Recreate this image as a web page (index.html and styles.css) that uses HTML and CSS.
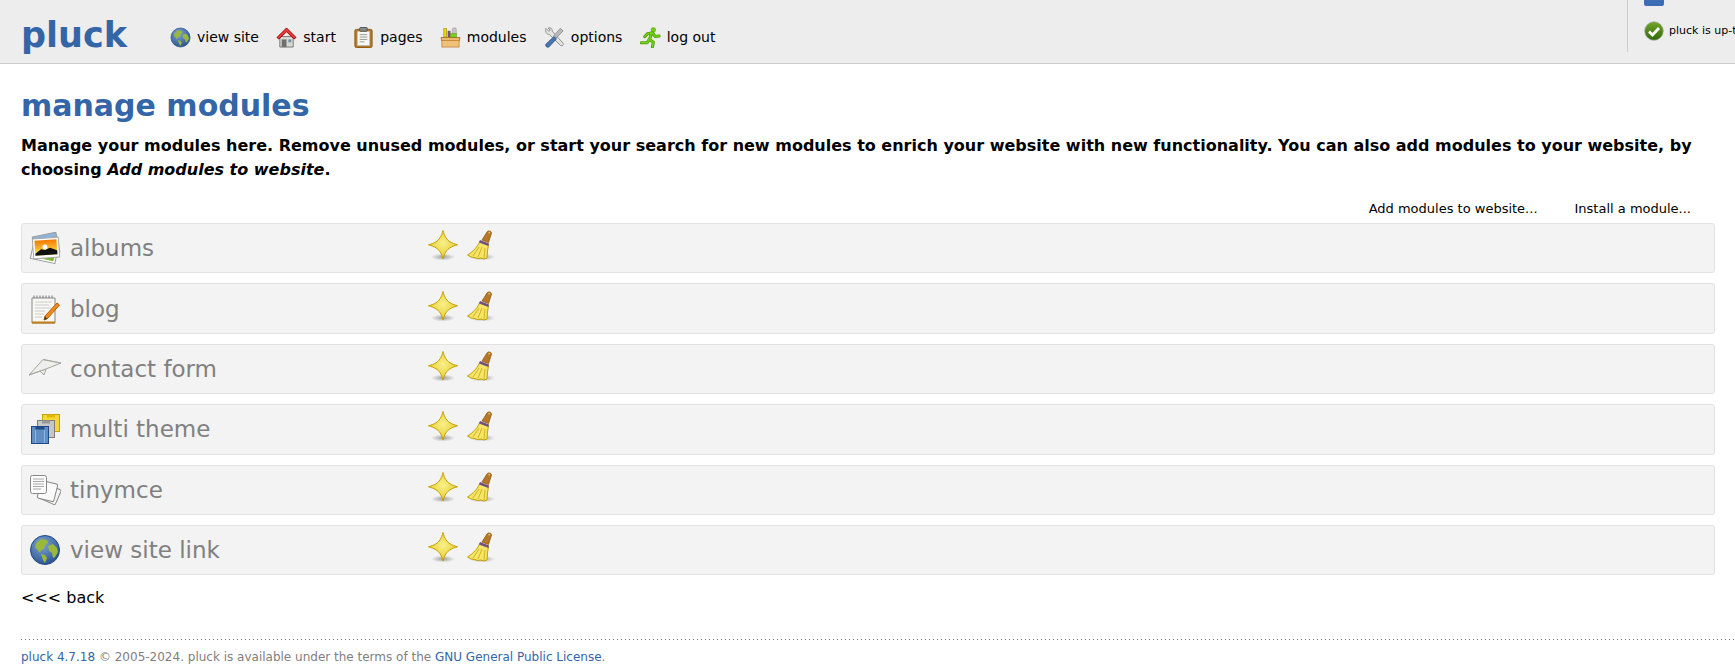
FILE: index.html
```html
<!DOCTYPE html>
<html>
<head>
    <title>manage modules - pluck</title>
    <link rel="stylesheet" href="styles.css">
</head>
<body>
    <svg class="defs" width="0" height="0">
        <defs>
            <radialGradient id="seaGrad" cx="0.4" cy="0.3" r="0.8">
                <stop offset="0" stop-color="#7fa6d6"/>
                <stop offset="1" stop-color="#204a87"/>
            </radialGradient>
            <radialGradient id="starGrad" cx="0.5" cy="0.45" r="0.5">
                <stop offset="0" stop-color="#f9f08c"/>
                <stop offset="1" stop-color="#e6cf30"/>
            </radialGradient>
            <radialGradient id="shadowGrad">
                <stop offset="0" stop-color="#000" stop-opacity="0.35"/>
                <stop offset="1" stop-color="#000" stop-opacity="0"/>
            </radialGradient>
            <linearGradient id="skyGrad" x1="0" y1="0" x2="0" y2="1">
                <stop offset="0" stop-color="#f57900"/>
                <stop offset="1" stop-color="#fce94f"/>
            </linearGradient>
            <linearGradient id="checkGrad" x1="0" y1="0" x2="0" y2="1">
                <stop offset="0" stop-color="#73a62c"/>
                <stop offset="1" stop-color="#2f6a08"/>
            </linearGradient>
            <symbol id="i-globe" viewBox="0 0 32 32">
                <circle cx="16" cy="16" r="14.5" fill="url(#seaGrad)" stroke="#204a87"/>
                <path d="M7 9l5-4 6 1 1 3-3 2-1 4-3 1-1 3-3-4-2-1zM19 12l5-2 4 4 1 4-3 5-2 1-1-5-3-2zM12 20l4 1 2 3-2 5-2-3z" fill="#9ab83c"/>
            </symbol>
            <symbol id="i-star" viewBox="0 0 32 32">
                <ellipse cx="16" cy="28" rx="12" ry="3.5" fill="url(#shadowGrad)"/>
                <path d="M16 1.500C17.500 7.500 20 11 23 12.800 25 14 27.500 15 30.500 15.800 27.500 16.600 25 17.600 23 18.800 20 20.600 17.500 24 16 30 14.500 24 12 20.600 9 18.800 7 17.600 4.500 16.600 1.500 15.800 4.500 15 7 14 9 12.800 12 11 14.500 7.500 16 1.500z" fill="url(#starGrad)" stroke="#c4a000" stroke-linejoin="round"/>
            </symbol>
            <symbol id="i-broom" viewBox="0 0 32 32">
                <ellipse cx="18" cy="28" rx="13" ry="3.500" fill="url(#shadowGrad)"/>
                <path d="M18 11l5-8c1-1.700 4.500-1.200 4.500 1l-3 9.500z" fill="#b5772a" stroke="#8f5902" stroke-width=".8"/>
                <circle cx="25.300" cy="3.700" r=".9" fill="#e9b96e"/>
                <path d="M16 12L24.500 15.500 23.500 22 23 29 20 30 17 29 14 29.500 10 28.500 7 28 3.500 26C10 22 14 17 16 12z" fill="#f4e468" stroke="#c4a000" stroke-linejoin="round"/>
                <path d="M16 11l9 3.500-.6 2.500-9.400-3.500z" fill="#75507b"/>
                <path d="M15 18l-6 9M18 18l-4 10M21 19l-1 10" fill="none" stroke="#c4a000" stroke-width=".7"/>
            </symbol>
            <symbol id="i-albums" viewBox="0 0 32 32">
                <rect x="5" y="2.500" width="24" height="20" fill="#8cb4dc" stroke="#999" transform="rotate(-12 17 12)"/>
                <rect x="3" y="10" width="25" height="19" fill="#fff" stroke="#999" transform="rotate(12 15 20)"/>
                <rect x="5" y="13" width="21" height="14" fill="#73b828" transform="rotate(12 15 20)"/>
                <g transform="rotate(-4 17 16)">
                    <rect x="4" y="6" width="26" height="20" fill="#fff" stroke="#aaa"/>
                    <rect x="6" y="8" width="22" height="15" fill="url(#skyGrad)"/>
                    <circle cx="16" cy="15" r="2.500" fill="#fff"/>
                    <path d="M6 21l6-4 4 1 5-2 7 3v4H6z" fill="#111"/>
                </g>
            </symbol>
            <symbol id="i-blog" viewBox="0 0 32 32">
                <path d="M3 5h23v25H3z" fill="#f7f7f3" stroke="#888"/>
                <path d="M3 29.500h23" stroke="#c17d11" stroke-width="2"/>
                <path d="M5 5V2.500M8 5V2.500M11 5V2.500M14 5V2.500M17 5V2.500M20 5V2.500M23 5V2.500" stroke="#777"/>
                <path d="M6 9h17M6 12h14M6 15h16M6 18h10M6 21h9M6 24h7" stroke="#ccc"/>
                <path d="M15 27l1-4L28 10l2.500 2L18 26z" fill="#f08a1d" stroke="#b85f00" stroke-linejoin="round"/>
                <path d="M15 27l1-3.500 2 2z" fill="#333"/>
            </symbol>
            <symbol id="i-plane" viewBox="0 0 32 32">
                <path d="M0 22L14 6.500 32 10 17 16 15 22 11 18z" fill="#eeeeec" stroke="#a5a59c" stroke-linejoin="round"/>
                <path d="M0 22L17 16M11 18l6-2M14 6.500L32 10" fill="none" stroke="#a5a59c" stroke-width=".8"/>
            </symbol>
            <symbol id="i-theme" viewBox="0 0 32 32">
                <rect x="13.500" y="1.500" width="17" height="17" fill="#f5d63a" stroke="#c4a000"/>
                <path d="M18 1.500h8v3h-8z" fill="#e0b800"/>
                <rect x="8.500" y="7.500" width="17" height="17" fill="#c6c6c3" stroke="#7d7d7a"/>
                <path d="M13 7.500h8v3h-8z" fill="#999"/>
                <rect x="2.500" y="13.500" width="17" height="17" fill="#5e8ec4" stroke="#204a87"/>
                <path d="M6.500 13.500h9v3h-9z" fill="#204a87"/>
                <path d="M6.500 17v13M15.500 17v13" stroke="#8fb3dc"/>
            </symbol>
            <symbol id="i-docs" viewBox="0 0 32 32">
                <rect x="12" y="12" width="18" height="16" rx="1.500" fill="#f6f6f4" stroke="#888" transform="rotate(24 21 20)"/>
                <rect x="10" y="8" width="17" height="18" rx="1.500" fill="#fafafa" stroke="#888" transform="rotate(14 18 17)"/>
                <rect x="1.500" y="1.500" width="16" height="18" rx="2" fill="#fcfcfc" stroke="#888"/>
                <path d="M4 5h11M4 7.500h11M4 10h11M4 12.500h11M4 15h8" stroke="#aaa"/>
            </symbol>
            <symbol id="i-home" viewBox="0 0 22 22">
                <path d="M4 10h14v11H4z" fill="#d8d8d4" stroke="#777"/>
                <path d="M6 13h5v8H6z" fill="#6f6f6c"/>
                <path d="M13 13h3v3h-3z" fill="#6f8caf"/>
                <path d="M1 11L11 1l10 10-2 1.500L11 5l-8 7.500z" fill="#e63c3c" stroke="#a40000" stroke-linejoin="round"/>
            </symbol>
            <symbol id="i-pages" viewBox="0 0 22 22">
                <rect x="2" y="2.500" width="18" height="19" rx="1.500" fill="#b5772a" stroke="#8f5902"/>
                <path d="M4.500 4.500h13v15h-13z" fill="#f8f8f6" stroke="#aaa" stroke-width=".6"/>
                <rect x="7" y=".5" width="8" height="4" rx="1" fill="#888a85" stroke="#555"/>
                <path d="M7 8h8M7 10.500h8M7 13h8M7 15.500h5" stroke="#999"/>
            </symbol>
            <symbol id="i-modules" viewBox="0 0 22 22">
                <rect x="4" y="1.500" width="3" height="9" fill="#edd400" stroke="#8a7a00" stroke-width=".5"/>
                <rect x="8" y="4" width="3" height="7" fill="#75507b"/>
                <rect x="13" y="1" width="4" height="10" rx="1" fill="#c6c6c3" stroke="#888" stroke-width=".5"/>
                <rect x="11" y="7" width="6" height="4" fill="#73d216" stroke="#4e9a06" stroke-width=".5"/>
                <path d="M1 11h20l-1 4H2z" fill="#e9b96e" stroke="#8f5902" stroke-width=".7"/>
                <rect x="2" y="14" width="18" height="7" fill="#f0c179" stroke="#b5772a" stroke-width=".7"/>
            </symbol>
            <symbol id="i-tools" viewBox="0 0 22 22">
                <path d="M2 1.500l3 3 1.500-1L4.500 1c2.500-.8 4.500 1 4.200 3.500L20 17c1 1.500-.8 3.500-2.500 2.500L5.500 7.800C3 8 .8 5 2 1.500z" fill="#e4e4e0" stroke="#777" stroke-width=".8"/>
                <path d="M17 1.500l3 2.500-7 7.500-2.500-2.500z" fill="#bbb" stroke="#777" stroke-width=".7"/>
                <path d="M10.500 10L13 12.500 5 21c-1.500 1-4-1-3-3z" fill="#4a76ad" stroke="#204a87" stroke-width=".8"/>
            </symbol>
            <symbol id="i-run" viewBox="0 0 22 22">
                <circle cx="14" cy="3" r="2.300" fill="#73d216" stroke="#4e9a06" stroke-width=".7"/>
                <path d="M8 7l5-1 3 4 4-.5M12 7l-2 6 4 3-1 5M9.500 13l-2 3.500H1.500M8 7l-3 3" fill="none" stroke="#4e9a06" stroke-width="3.200" stroke-linecap="round" stroke-linejoin="round"/>
                <path d="M8 7l5-1 3 4 4-.5M12 7l-2 6 4 3-1 5M9.500 13l-2 3.500H1.500M8 7l-3 3" fill="none" stroke="#73d216" stroke-width="1.600" stroke-linecap="round" stroke-linejoin="round"/>
            </symbol>
            <symbol id="i-check" viewBox="0 0 20 20">
                <circle cx="10" cy="10" r="9.300" fill="url(#checkGrad)" stroke="#aaa" stroke-width=".7"/>
                <path d="M5 10.500l3.500 3.500L15 7" fill="none" stroke="#fff" stroke-width="2.800"/>
            </symbol>
        </defs>
    </svg>

    <div class="header">
        <a class="logo" href="#">pluck</a>
        <ul class="nav">
            <li><svg class="nav-icon"><use href="#i-globe"/></svg>view site</li>
            <li><svg class="nav-icon"><use href="#i-home"/></svg>start</li>
            <li><svg class="nav-icon"><use href="#i-pages"/></svg>pages</li>
            <li><svg class="nav-icon"><use href="#i-modules"/></svg>modules</li>
            <li><svg class="nav-icon"><use href="#i-tools"/></svg>options</li>
            <li><svg class="nav-icon"><use href="#i-run"/></svg>log out</li>
        </ul>
        <div class="status">
            <div class="trash-stub"></div>
            <div class="status-line">
                <svg class="status-icon"><use href="#i-check"/></svg>
                <span class="status-text">pluck is up-to-date</span>
            </div>
        </div>
    </div>

    <div class="content">
        <h1>manage modules</h1>
        <p class="intro">Manage your modules here. Remove unused modules, or start your search for new modules to enrich your website with new functionality. You can also add modules to your website, by choosing <em>Add modules to website</em>.</p>

        <div class="actions">
            <a href="#">Add modules to website...</a>
            <a href="#">Install a module...</a>
        </div>

        <div class="module">
            <svg class="module-icon"><use href="#i-albums"/></svg>
            <span class="module-name">albums</span>
            <svg class="tool-icon"><use href="#i-star"/></svg>
            <svg class="tool-icon"><use href="#i-broom"/></svg>
        </div>
        <div class="module">
            <svg class="module-icon"><use href="#i-blog"/></svg>
            <span class="module-name">blog</span>
            <svg class="tool-icon"><use href="#i-star"/></svg>
            <svg class="tool-icon"><use href="#i-broom"/></svg>
        </div>
        <div class="module">
            <svg class="module-icon"><use href="#i-plane"/></svg>
            <span class="module-name">contact form</span>
            <svg class="tool-icon"><use href="#i-star"/></svg>
            <svg class="tool-icon"><use href="#i-broom"/></svg>
        </div>
        <div class="module">
            <svg class="module-icon"><use href="#i-theme"/></svg>
            <span class="module-name">multi theme</span>
            <svg class="tool-icon"><use href="#i-star"/></svg>
            <svg class="tool-icon"><use href="#i-broom"/></svg>
        </div>
        <div class="module">
            <svg class="module-icon"><use href="#i-docs"/></svg>
            <span class="module-name">tinymce</span>
            <svg class="tool-icon"><use href="#i-star"/></svg>
            <svg class="tool-icon"><use href="#i-broom"/></svg>
        </div>
        <div class="module">
            <svg class="module-icon"><use href="#i-globe"/></svg>
            <span class="module-name">view site link</span>
            <svg class="tool-icon"><use href="#i-star"/></svg>
            <svg class="tool-icon"><use href="#i-broom"/></svg>
        </div>

        <p class="back"><a href="#">&lt;&lt;&lt; back</a></p>
    </div>

    <div class="footer">
        <a href="#">pluck 4.7.18</a> © 2005-2024. pluck is available under the terms of the <a href="#">GNU General Public License</a>.
    </div>
</body>
</html>
```

FILE: styles.css
```css
html, body {
    height: 100%;
}
body {
    font-family: "DejaVu Sans", sans-serif;
    margin: 0;
    padding: 0;
    background-color: #fff;
    color: #000;
    overflow: hidden;
}
a {
    color: inherit;
    text-decoration: none;
}
.defs {
    display: block;
    height: 0;
}
.header {
    display: flex;
    height: 63px;
    background-color: #ededed;
    border-bottom: 1px solid #ccc;
    overflow: hidden;
}
.logo {
    flex: none;
    width: 149px;
    padding: 15px 0 0 21px;
    font-size: 35px;
    font-weight: bold;
    line-height: 41px;
    color: #3465a7;
}
.nav {
    display: flex;
    flex: 1;
    gap: 17.3px;
    margin: 0;
    padding: 26px 0 0;
    list-style: none;
}
.nav li {
    display: flex;
    align-items: center;
    gap: 6px;
    height: 22px;
    font-size: 14px;
    white-space: nowrap;
}
.nav-icon {
    flex: none;
    width: 21px;
    height: 21px;
}
.status {
    flex: none;
    width: 91px;
    height: 52px;
    padding-left: 16px;
    border-left: 1px solid #ccc;
    white-space: nowrap;
}
.trash-stub {
    width: 20px;
    height: 6px;
    background-color: #3b6cb4;
    border-radius: 0 0 2px 2px;
}
.status-line {
    display: flex;
    align-items: center;
    gap: 5px;
    margin-top: 15px;
    font-size: 11px;
}
.status-icon {
    flex: none;
    width: 20px;
    height: 20px;
}
.status-text {
    margin-top: -2px;
}
.content {
    padding: 0 20px 0 21px;
}
h1 {
    margin: 24px 0 0;
    font-size: 30px;
    line-height: 35px;
    font-weight: bold;
    color: #3465a7;
}
.intro {
    margin: 11px 0 0;
    font-size: 16px;
    line-height: 24px;
    font-weight: bold;
}
.actions {
    display: flex;
    justify-content: flex-end;
    gap: 37px;
    margin-top: 19px;
    padding-right: 24px;
    font-size: 13px;
    line-height: 16px;
}
.module {
    display: flex;
    align-items: center;
    box-sizing: border-box;
    height: 50.4px;
    margin-top: 10px;
    padding-left: 7px;
    background-color: #f3f3f3;
    border: 1px solid #e1e1e1;
    border-radius: 3px;
}
.actions + .module {
    margin-top: 6px;
}
.module-icon {
    flex: none;
    width: 32px;
    height: 32px;
}
.module-name {
    flex: none;
    width: 366px;
    padding-left: 9px;
    box-sizing: border-box;
    font-size: 23px;
    color: #808080;
}
.tool-icon {
    flex: none;
    width: 32px;
    height: 32px;
    margin-top: -6px;
}
.module-name + .tool-icon {
    margin-right: 5px;
}
.back {
    margin: 14px 0 0;
    font-size: 16px;
    line-height: 18px;
}
.footer {
    margin: 32px 0 0 21px;
    padding-top: 9px;
    background-image: linear-gradient(to right, #777 1px, transparent 1px);
    background-size: 4px 1px;
    background-repeat: repeat-x;
    font-size: 12px;
    line-height: 18px;
    color: #808080;
}
.footer a {
    color: #3465a7;
}
```
